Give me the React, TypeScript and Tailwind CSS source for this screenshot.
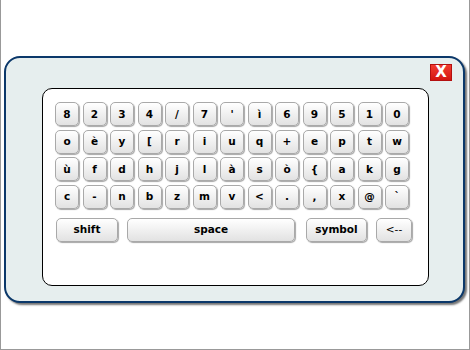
import React from "react";

const rows: string[][] = [
  ["8", "2", "3", "4", "/", "7", "'", "ì", "6", "9", "5", "1", "0"],
  ["o", "è", "y", "[", "r", "i", "u", "q", "+", "e", "p", "t", "w"],
  ["ù", "f", "d", "h", "j", "l", "à", "s", "ò", "{", "a", "k", "g"],
  ["c", "-", "n", "b", "z", "m", "v", "<", ".", ",", "x", "@", "`"],
];

const keyCls =
  "flex items-center justify-center h-[24px] rounded-[5px] border border-[#a9a9a9] bg-gradient-to-b from-[#ffffff] to-[#e2e2e2] shadow-[1px_1px_1px_rgba(0,0,0,0.35)] text-[10.5px] font-bold text-black leading-none";

export default function App() {
  return (
    <div
      className="w-[470px] h-[350px] bg-white border-l border-r border-b border-[#999999] pt-[56px] pl-[3px]"
      style={{ fontFamily: '"DejaVu Sans", Verdana, sans-serif' }}
    >
      <div className="relative w-[461px] h-[247px] rounded-[16px] border-2 border-[#0b386a] bg-[#e6eeee] shadow-[2px_2px_2px_rgba(0,0,0,0.55)] pt-[30px] pl-[36px]">
        <div className="absolute top-[6px] right-[11px] w-[22px] h-[17px] bg-gradient-to-b from-[#f23a2e] to-[#d4140f] border border-[#b31010] flex items-center justify-center text-white text-[15px] font-bold leading-none">
          X
        </div>
        <div className="w-[387px] h-[198px] bg-white border border-black rounded-[10px] pt-[13px] pl-[12px] flex flex-col">
          <div className="flex flex-col gap-[3.5px]">
            {rows.map((r, i) => (
              <div key={i} className="flex gap-[3.5px]">
                {r.map((k, j) => (
                  <div key={j} className={keyCls + " w-[24px]"}>
                    {k}
                  </div>
                ))}
              </div>
            ))}
          </div>
          <div className="flex mt-[9px] ml-[1px]">
            <div className={keyCls + " w-[62px]"}>shift</div>
            <div className={keyCls + " w-[168px] ml-[9px]"}>space</div>
            <div className={keyCls + " w-[61px] ml-[11px]"}>symbol</div>
            <div className={keyCls + " w-[36px] ml-[9px] font-normal"}>&lt;--</div>
          </div>
        </div>
      </div>
    </div>
  );
}
